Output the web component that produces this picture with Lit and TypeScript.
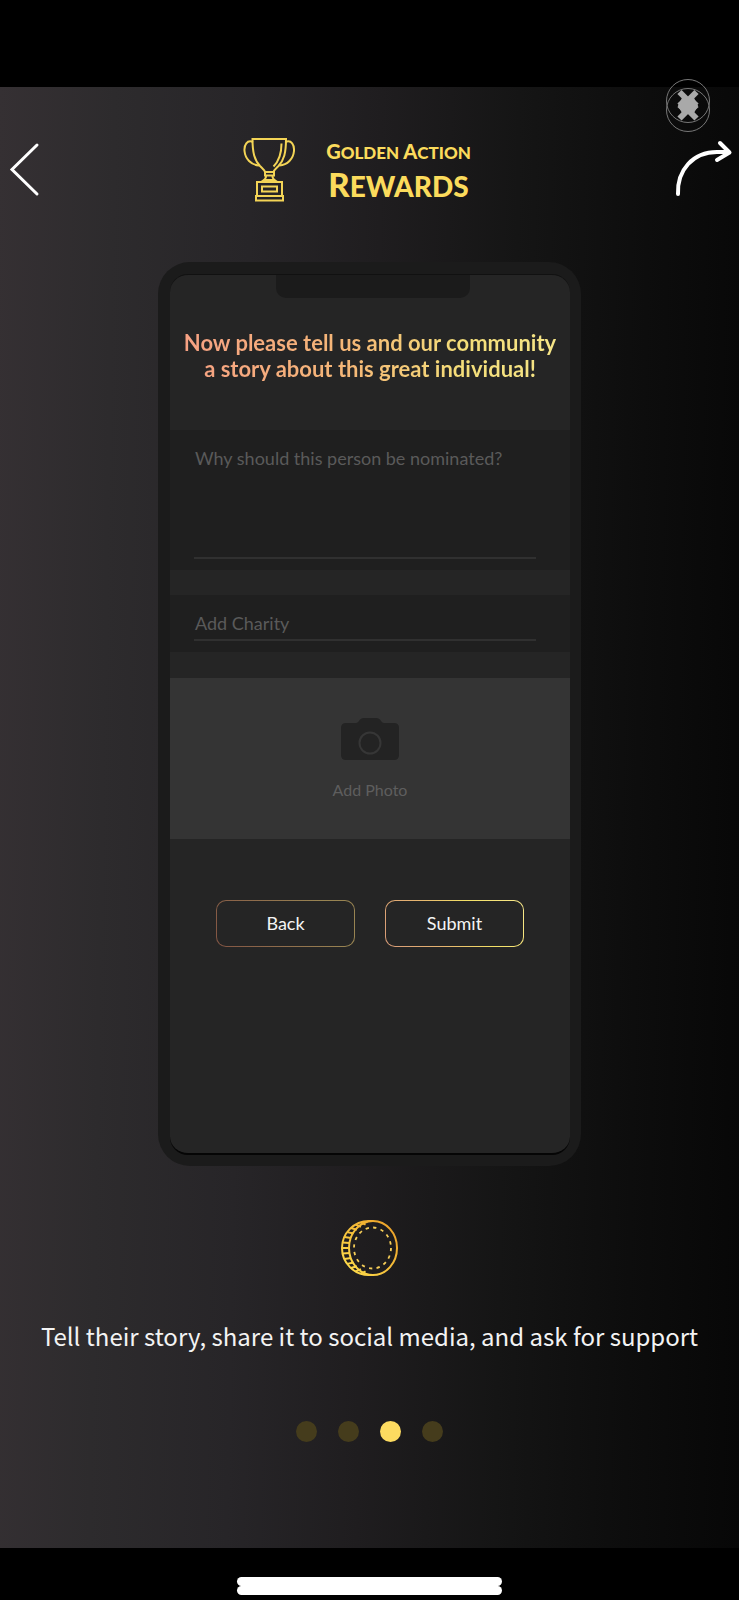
import { LitElement, html, css, svg } from "lit";
import { customElement, property, state } from "lit/decorators.js";
import { classMap } from "lit/directives/class-map.js";

@customElement("app-header")
class AppHeader extends LitElement {
  static styles = css`
    :host {
      display: block;
    }
    .bar {
      display: grid;
      grid-template-columns: 1fr auto 1fr;
      align-items: start;
      padding: 49px 6px 0 8px;
    }
    .icon {
      display: block;
      padding: 0;
      border: 0;
      background: none;
      cursor: pointer;
    }
    .icon svg,
    .trophy {
      display: block;
    }
    .back {
      margin-top: 4px;
    }
    .share {
      justify-self: end;
      margin-top: 4px;
    }
    .brand {
      display: flex;
      align-items: flex-start;
      gap: 29px;
      height: 66px;
      margin-right: 27px;
    }
    .name {
      display: flex;
      flex-direction: column;
      align-items: center;
      margin: 0;
      color: #fbdb5c;
      font-family: Lato, sans-serif;
      font-weight: 900;
      text-transform: uppercase;
      white-space: nowrap;
    }
    .small {
      font-size: 17px;
      line-height: 30px;
    }
    .large {
      font-size: 28px;
      line-height: 32px;
    }
    .word {
      display: inline-block;
    }
    .small .word::first-letter {
      font-size: 20px;
    }
    .large .word::first-letter {
      font-size: 33px;
    }
  `;

  render() {
    return html`
      <header class="bar">
        <button class="icon back" aria-label="Back">
          <svg width="34" height="58" viewBox="0 0 34 58" fill="none" stroke="#fff" stroke-width="3" stroke-linecap="round">
            <path d="M29 5L4 29.500L29 54" />
          </svg>
        </button>
        <div class="brand">
          <svg class="trophy" width="54" height="66" viewBox="0 0 54 66" fill="none" stroke="#f3d456" stroke-width="2">
            <path d="M9.500 3H43C43 17 41 24 35.500 30C32.500 33 31 34 30.500 36H22C21.500 34 20 33 17 30C11.500 24 9.500 17 9.500 3Z" />
            <path d="M10 6C4 3.500 1 9 1.500 15C2.300 23 8 29 16 29.500M42.500 6C48.500 3.500 51.500 9 51 15C50.200 23 44.500 29 36.500 29.500" />
            <path d="M38.500 7.500C38.500 18 36 25 30.500 30.500" />
            <path d="M22 36H31V39.500H22ZM23 39.500C23.500 42 21.500 44 18 46M29.500 39.500C29 42 31 44 34.500 46M21 44H31.500" />
            <path d="M14 46H39V60H14ZM19 50.500H34V55.500H19ZM13 60H40V64.500H13Z" />
          </svg>
          <h1 class="name">
            <span class="small"><span class="word">Golden</span> <span class="word">Action</span></span>
            <span class="large"><span class="word">Rewards</span></span>
          </h1>
        </div>
        <button class="icon share" aria-label="Share">
          <svg width="58" height="58" viewBox="0 0 58 58" fill="none" stroke="#fff" stroke-width="4" stroke-linecap="round" stroke-linejoin="round">
            <path d="M3 54C2 30 18 12 42 12H53M45 3L54.500 12.500L42 20" />
          </svg>
        </button>
      </header>
    `;
  }
}

@customElement("story-form")
class StoryForm extends LitElement {
  static styles = css`
    :host {
      display: block;
      color: #5a5a5a;
      font-family: Lato, sans-serif;
    }
    .phone {
      padding: 12px 11px 11px 12px;
      border-radius: 32px;
      background: #1b1b1b;
    }
    .screen {
      display: flex;
      flex-direction: column;
      overflow: hidden;
      border-top: 1px solid #111;
      border-bottom: 2px solid #050505;
      border-radius: 18px;
      background: #252525;
      padding-bottom: 206px;
    }
    .notch {
      width: 194px;
      height: 23px;
      margin-left: 106px;
      border-radius: 0 0 10px 10px;
      background: #1b1b1b;
    }
    .title {
      margin: 32px auto 48px;
      font-size: 22px;
      font-weight: 700;
      line-height: 26px;
      text-align: center;
      white-space: nowrap;
      background: linear-gradient(90deg, #f6a183, #f5b877 45%, #f4de79 75%, #f6e587);
      background-clip: text;
      -webkit-background-clip: text;
      color: transparent;
    }
    .line {
      display: block;
    }
    .field {
      display: grid;
      padding: 0 34px 11px 24px;
      background: #1f1f1f;
    }
    .field + .field {
      margin-top: 25px;
    }
    .label,
    .input {
      grid-area: 1 / 1;
      font: 400 18px/22px Lato, sans-serif;
    }
    .label {
      margin-top: 17px;
      padding-left: 1px;
      pointer-events: none;
    }
    .input:not(:placeholder-shown) + .label {
      visibility: hidden;
    }
    .input {
      min-width: 0;
      box-sizing: border-box;
      margin: 0;
      padding: 17px 1px 0;
      border: 0;
      border-bottom: 2px solid #303030;
      border-radius: 0;
      outline: none;
      resize: none;
      background: none;
      color: #ccc;
    }
    .story {
      height: 129px;
    }
    .charity {
      height: 46px;
    }
    .photo {
      display: flex;
      flex-direction: column;
      align-items: center;
      gap: 20px;
      margin-top: 26px;
      padding: 40px 0 39px;
      border: 0;
      background: #343434;
      color: #5e5e5e;
      font: 400 16px/20px Lato, sans-serif;
      cursor: pointer;
    }
    .actions {
      display: flex;
      justify-content: center;
      gap: 30px;
      margin-top: 61px;
    }
    .action {
      width: 139px;
      height: 47px;
      padding: 0 0 1px;
      border: 1px solid transparent;
      border-radius: 10px;
      background:
        linear-gradient(#252525, #252525) padding-box,
        linear-gradient(60deg, #d79a78, #e6b470 35%, #f3e065 65%, #f8e88c) border-box;
      color: #f4f4f4;
      font: 400 18px/22px Lato, sans-serif;
      cursor: pointer;
    }
    .muted {
      background:
        linear-gradient(#252525, #252525) padding-box,
        linear-gradient(60deg, #825443, #8f6d4c 40%, #988452 80%) border-box;
    }
  `;

  render() {
    return html`
      <form class="phone" @submit=${(e: Event) => e.preventDefault()}>
        <div class="screen">
          <div class="notch"></div>
          <h2 class="title">
            <span class="line">Now please tell us and our community</span>
            <span class="line">a story about this great individual!</span>
          </h2>
          <div class="field">
            <textarea id="story" class="input story" placeholder=" "></textarea>
            <label class="label" for="story">Why should this person be nominated?</label>
          </div>
          <div class="field">
            <input id="charity" class="input charity" type="text" placeholder=" " />
            <label class="label" for="charity">Add Charity</label>
          </div>
          <button class="photo" type="button">
            <svg width="58" height="42" viewBox="0 0 58 42">
              <path
                fill="#232323"
                d="M5 5H15C18 5 18 0 23 0H35C40 0 40 5 43 5H53Q58 5 58 10V37Q58 42 53 42H5Q0 42 0 37V10Q0 5 5 5Z"
              />
              <circle cx="29" cy="25" r="10.500" fill="none" stroke="#363636" stroke-width="2" />
            </svg>
            Add Photo
          </button>
          <div class="actions">
            <button class="action muted" type="button">Back</button>
            <button class="action" type="submit">Submit</button>
          </div>
        </div>
      </form>
    `;
  }
}

@customElement("page-dots")
class PageDots extends LitElement {
  @property({ type: Number }) count = 4;
  @state() private current = 2;

  static styles = css`
    :host {
      display: block;
    }
    .dots {
      display: flex;
      justify-content: center;
      gap: 21px;
    }
    .dot {
      width: 21px;
      height: 21px;
      padding: 0;
      border: 0;
      border-radius: 50%;
      background: #453c1c;
      cursor: pointer;
    }
    .active {
      background: #fddb60;
    }
  `;

  render() {
    return html`
      <nav class="dots" aria-label="Steps">
        ${Array.from(
          { length: this.count },
          (_, i) => html`<button
            class=${classMap({ dot: true, active: i === this.current })}
            aria-label="Step ${i + 1}"
            @click=${() => (this.current = i)}
          ></button>`
        )}
      </nav>
    `;
  }
}

/* Short ribs joining the rim and the face along the coin's left side. */
const ribs = Array.from({ length: 13 }, (_, i) => {
  const a = ((108 + i * 12) * Math.PI) / 180;
  return svg`<path d="M${28 + 27 * Math.cos(a)} ${29 - 27 * Math.sin(a)}L${32 + 24 * Math.cos(a)} ${29 - 24.5 * Math.sin(a)}" />`;
});

@customElement("app-root")
class AppRoot extends LitElement {
  static styles = css`
    :host {
      display: block;
      min-height: 100vh;
      background: #000;
    }
    .page {
      position: relative;
      display: flex;
      flex-direction: column;
      min-height: 100vh;
      padding-top: 87px;
      box-sizing: border-box;
    }
    .stage {
      flex: 1;
      display: flex;
      flex-direction: column;
      background: linear-gradient(91deg, #353033, #2d2b2d 15%, #272528 33%, #1f1d1f 50%, #151515 68%, #0d0d0d 85%, #070707);
    }
    .form {
      width: min(423px, 94%);
      margin: 60px auto 53px;
    }
    .coin {
      display: block;
      margin: 0 auto;
    }
    .caption {
      margin: 39px 24px 65px;
      color: #f3f3f3;
      font: 400 24px/40px "Noto Sans CJK SC", sans-serif;
      text-align: center;
    }
    .close {
      position: absolute;
      top: 78px;
      right: 28px;
      padding: 0;
      border: 0;
      background: none;
      cursor: pointer;
    }
    .close svg {
      display: block;
    }
    .footer {
      display: flex;
      flex-direction: column;
      align-items: center;
      padding: 29px 0 5px;
    }
    .home {
      width: 265px;
      height: 9px;
      border-radius: 5px;
      background: #fff;
    }
  `;

  render() {
    return html`
      <div class="page">
        <main class="stage">
          <app-header></app-header>
          <story-form class="form"></story-form>
          <svg class="coin" width="58" height="58" viewBox="0 0 58 58" fill="none" stroke-width="2">
            <defs>
              <linearGradient id="gold" x1="0" y1="58" x2="58" y2="0" gradientUnits="userSpaceOnUse">
                <stop offset="0" stop-color="#ffe24f" />
                <stop offset="1" stop-color="#ea9a24" />
              </linearGradient>
            </defs>
            <g stroke="url(#gold)">
              <ellipse cx="32" cy="29" rx="24" ry="27" />
              <path d="M32 2H28A27 27 0 0 0 28 56H32" />
              <g>${ribs}</g>
            </g>
            <ellipse cx="31.500" cy="29" rx="18.500" ry="20.500" stroke="#f5cd58" stroke-width="1.800" stroke-dasharray="3.300 4.370" />
          </svg>
          <p class="caption">Tell their story, share it to social media, and ask for support</p>
          <page-dots .count=${4}></page-dots>
        </main>
        <footer class="footer">
          <div class="home"></div>
          <div class="home"></div>
        </footer>
        <button class="close" aria-label="Close">
          <svg width="46" height="55" viewBox="0 0 46 55" fill="none">
            <g stroke="#777" stroke-width="1">
              <circle cx="23" cy="23" r="21.500" />
              <circle cx="23" cy="32" r="21.500" />
            </g>
            <path stroke="#a9a9a9" stroke-width="6" d="M14.500 14L31.500 31M31.500 14L14.500 31M14.500 23.500L31.500 40.500M31.500 23.500L14.500 40.500" />
            <path fill="#a9a9a9" d="M17 20H29L33 27.500L29 35H17L13 27.500Z" />
          </svg>
        </button>
      </div>
    `;
  }
}
